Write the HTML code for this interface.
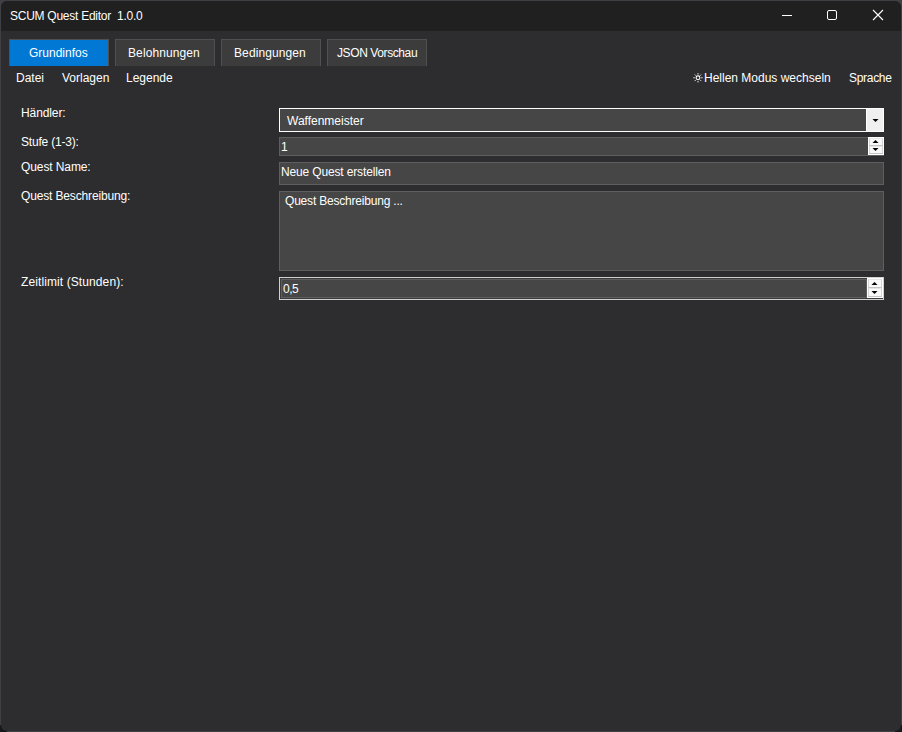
<!DOCTYPE html>
<html><head><meta charset="utf-8">
<style>
*{margin:0;padding:0;box-sizing:border-box}
html,body{width:902px;height:732px;overflow:hidden;background:#3e4044;font-family:"Liberation Sans",sans-serif;font-size:12px;color:#ffffff}
.win{position:absolute;left:1px;top:1px;width:900px;height:730px;background:#2d2d30;border-radius:6px;overflow:hidden}
.title{position:absolute;left:0;top:0;width:900px;height:30px;background:#202020}
.t{position:absolute;white-space:nowrap;line-height:12px;height:12px}
.tab{position:absolute;top:39px;height:27px;background:#3c3c3c;border:1px solid #505050;border-bottom:0}
.tab.sel{background:#0078d4}
.box{position:absolute;background:#464646;border:1px solid #5e5e5e}
svg{position:absolute;overflow:visible}
</style></head><body>
<div style="position:absolute;left:0;top:725px;width:7px;height:7px;background:#16181d"></div>
<div style="position:absolute;left:895px;top:725px;width:7px;height:7px;background:#16181d"></div>
<div class="win">
  <div class="title"></div>
</div>
<div class="t" id="t_title" style="left:10px;top:10px;letter-spacing:-0.26px">SCUM Quest Editor&nbsp; 1.0.0</div>
<svg style="left:0;top:0" width="902" height="31">
  <rect x="782" y="15" width="10" height="1" fill="#ffffff"/>
  <rect x="827.5" y="10.5" width="9" height="9" rx="1.5" fill="none" stroke="#ffffff" stroke-width="1"/>
  <path d="M873 10 L883 20 M883 10 L873 20" stroke="#ffffff" stroke-width="1.1" fill="none"/>
</svg>

<div class="tab sel" style="left:9px;width:100px"></div>
<div class="tab" style="left:115px;width:100px"></div>
<div class="tab" style="left:221px;width:100px"></div>
<div class="tab" style="left:327px;width:100px"></div>
<div class="t" id="t_tab1" style="left:29px;top:47px">Grundinfos</div>
<div class="t" id="t_tab2" style="left:128px;top:47px;letter-spacing:0.1px">Belohnungen</div>
<div class="t" id="t_tab3" style="left:234px;top:47px;letter-spacing:0.1px">Bedingungen</div>
<div class="t" id="t_tab4" style="left:337px;top:47px;letter-spacing:-0.4px">JSON Vorschau</div>

<div class="t" id="t_m1" style="left:16px;top:72px">Datei</div>
<div class="t" id="t_m2" style="left:62px;top:72px">Vorlagen</div>
<div class="t" id="t_m3" style="left:126px;top:72px">Legende</div>
<svg style="left:0;top:0" width="902" height="100">
  <g transform="translate(698,77.8)" stroke="#ffffff" fill="none">
    <circle r="1.9" stroke-width="1.1"/>
    <path stroke-width="1" d="M0 -3.3V-4.6M0 3.3V4.6M-3.3 0H-4.6M3.3 0H4.6M2.4 2.4L3.3 3.3M-2.4 -2.4L-3.3 -3.3M2.4 -2.4L3.3 -3.3M-2.4 2.4L-3.3 3.3"/>
  </g>
</svg>
<div class="t" id="t_m4" style="left:704px;top:72px">Hellen Modus wechseln</div>
<div class="t" id="t_m5" style="left:849px;top:72px;letter-spacing:-0.3px">Sprache</div>

<div class="t" id="t_l1" style="left:21px;top:107px;letter-spacing:-0.1px">Händler:</div>
<div class="t" id="t_l2" style="left:21px;top:136px;letter-spacing:-0.2px">Stufe (1-3):</div>
<div class="t" id="t_l3" style="left:21px;top:161px;letter-spacing:-0.1px">Quest Name:</div>
<div class="t" id="t_l4" style="left:21px;top:190px;letter-spacing:-0.15px">Quest Beschreibung:</div>
<div class="t" id="t_l5" style="left:21px;top:276px;letter-spacing:0.1px">Zeitlimit (Stunden):</div>

<!-- combobox -->
<div class="box" style="left:279px;top:108px;width:605px;height:24px;border:1px solid #ffffff"></div>
<div style="position:absolute;left:866px;top:109px;width:17px;height:22px;background:#f0f0f0;border-left:1px solid #ffffff"></div>
<svg style="left:0;top:0" width="902" height="140"><path d="M872.5 119 H878.5 L875.5 122 Z" fill="#000"/></svg>
<div class="t" id="t_v1" style="left:287px;top:115px">Waffenmeister</div>

<!-- spin 1 -->
<div class="box" style="left:279px;top:137px;width:605px;height:19px"></div>
<div style="position:absolute;left:868px;top:137px;width:16px;height:18px;background:#ffffff"></div>
<div style="position:absolute;left:869px;top:138px;width:14px;height:8px;background:#f9f9f9;border:1px solid #d4d4d4;border-bottom-color:#c4c4c4;border-top-color:#e6e6e6"></div>
<div style="position:absolute;left:869px;top:146px;width:14px;height:8px;background:#f9f9f9;border:1px solid #d4d4d4;border-bottom-color:#c4c4c4;border-top-color:#e6e6e6"></div>
<svg style="left:0;top:0" width="902" height="160">
  <path d="M872.5 143 H878.5 L875.5 140 Z" fill="#000"/>
  <path d="M872.5 148 H878.5 L875.5 151 Z" fill="#000"/>
</svg>
<div class="t" id="t_v2" style="left:281px;top:141px">1</div>

<!-- quest name -->
<div class="box" style="left:279px;top:162px;width:605px;height:23px"></div>
<div class="t" id="t_v3" style="left:281px;top:166px;letter-spacing:-0.15px">Neue Quest erstellen</div>

<!-- description -->
<div class="box" style="left:279px;top:191px;width:605px;height:80px"></div>
<div class="t" id="t_v4" style="left:285px;top:195px;letter-spacing:-0.2px">Quest Beschreibung ...</div>

<!-- zeitlimit -->
<div class="box" style="left:279px;top:277px;width:605px;height:23px;border:1px solid #d0d0d0;background:#3a3a3a"></div>
<div style="position:absolute;left:281px;top:279px;width:586px;height:19px;border:1px solid #5e5e5e;background:#464646"></div>
<div style="position:absolute;left:867px;top:278px;width:16px;height:20px;background:#ffffff"></div>
<div style="position:absolute;left:868px;top:279px;width:14px;height:9px;background:#f9f9f9;border:1px solid #d4d4d4;border-bottom-color:#c4c4c4;border-top-color:#e6e6e6"></div>
<div style="position:absolute;left:868px;top:288px;width:14px;height:9px;background:#f9f9f9;border:1px solid #d4d4d4;border-bottom-color:#c4c4c4;border-top-color:#e6e6e6"></div>
<svg style="left:0;top:0" width="902" height="310">
  <path d="M871.5 285 H877.5 L874.5 282 Z" fill="#000"/>
  <path d="M871.5 291 H877.5 L874.5 294 Z" fill="#000"/>
</svg>
<div class="t" id="t_v5" style="left:283px;top:283px;letter-spacing:-0.5px">0,5</div>
</body></html>
